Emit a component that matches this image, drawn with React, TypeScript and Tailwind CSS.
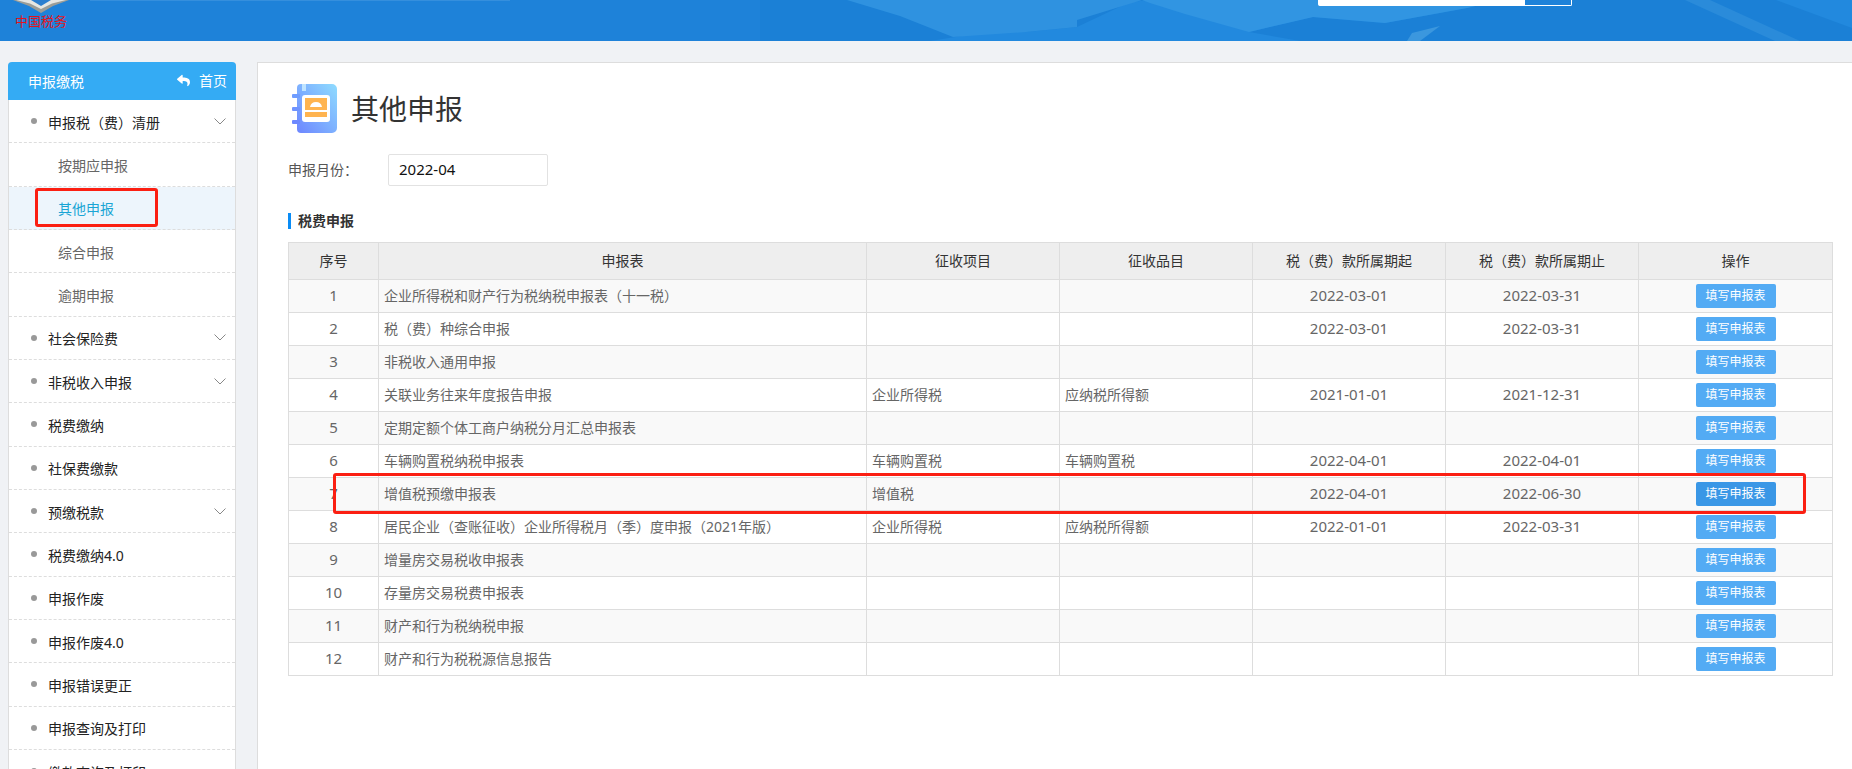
import { FaReply } from "react-icons/fa";

const menu = [
  { label: "申报税（费）清册", arrow: true },
  { label: "按期应申报", sub: true },
  { label: "其他申报", sub: true, active: true },
  { label: "综合申报", sub: true },
  { label: "逾期申报", sub: true },
  { label: "社会保险费", arrow: true },
  { label: "非税收入申报", arrow: true },
  { label: "税费缴纳" },
  { label: "社保费缴款" },
  { label: "预缴税款", arrow: true },
  { label: "税费缴纳4.0" },
  { label: "申报作废" },
  { label: "申报作废4.0" },
  { label: "申报错误更正" },
  { label: "申报查询及打印" },
  { label: "缴款查询及打印" },
];

const rows = [
  ["企业所得税和财产行为税纳税申报表（十一税）", "", "", "2022-03-01", "2022-03-31"],
  ["税（费）种综合申报", "", "", "2022-03-01", "2022-03-31"],
  ["非税收入通用申报", "", "", "", ""],
  ["关联业务往来年度报告申报", "企业所得税", "应纳税所得额", "2021-01-01", "2021-12-31"],
  ["定期定额个体工商户纳税分月汇总申报表", "", "", "", ""],
  ["车辆购置税纳税申报表", "车辆购置税", "车辆购置税", "2022-04-01", "2022-04-01"],
  ["增值税预缴申报表", "增值税", "", "2022-04-01", "2022-06-30"],
  ["居民企业（查账征收）企业所得税月（季）度申报（2021年版）", "企业所得税", "应纳税所得额", "2022-01-01", "2022-03-31"],
  ["增量房交易税收申报表", "", "", "", ""],
  ["存量房交易税费申报表", "", "", "", ""],
  ["财产和行为税纳税申报", "", "", "", ""],
  ["财产和行为税税源信息报告", "", "", "", ""],
];

const heads = ["序号", "申报表", "征收项目", "征收品目", "税（费）款所属期起", "税（费）款所属期止", "操作"];

function HeaderArt() {
  return (
    <svg className="absolute inset-0 w-full h-full" viewBox="0 0 1852 41" preserveAspectRatio="none">
      <polygon points="760,0 1852,0 1852,41 760,41" fill="#1b80d6" />
      <polygon points="930,41 1000,30 1026,32 1077,27 1130,2 1150,0 1500,0 1467,8 1385,23 1313,17 1249,32 1300,41" fill="#2289de" />
      <polygon points="847,0 1142,0 1077,20 1077,27 1026,32 953,37 900,16" fill="#2f92e0" />
      <polygon points="1142,0 1500,0 1467,8 1385,23 1313,17 1249,32 1185,14 1150,3" fill="#3195e2" />
      <polygon points="1685,0 1710,0 1800,41 1775,41" fill="#2a8bda" />
      <polygon points="1776,0 1852,0 1852,28" fill="#2289de" />
      <polygon points="1407,41 1412,33 1440,26 1420,41" fill="#3b97de" />
    </svg>
  );
}

function Logo() {
  return (
    <div className="relative flex flex-col items-center w-[52px] ml-[15px]">
      <svg width="56" height="13" viewBox="0 0 56 13" className="shrink-0">
        <path d="M0 0 H56 L40 6 L28 13 L16 6 Z" fill="#9a9d98" />
        <path d="M3 0 H53 L39 3.5 L28 9 L17 3.5 Z" fill="#e6e7e3" />
        <path d="M18 0 H38 L28 6 Z" fill="#2a7fd0" />
      </svg>
      <span className="text-[13px] leading-[16px] mt-[1px] text-[#e4141a] font-['Liberation_Serif','Noto_Sans_CJK_SC',serif] whitespace-nowrap">
        中国税务
      </span>
    </div>
  );
}

function NotebookIcon() {
  return (
    <svg width="45" height="49" viewBox="0 0 45 49" className="shrink-0 ml-[4px]">
      <defs>
        <linearGradient id="nb" x1="0" y1="1" x2="1" y2="0">
          <stop offset="0" stopColor="#6d86ff" />
          <stop offset="1" stopColor="#8fdcff" />
        </linearGradient>
      </defs>
      <path d="M5 4 a4 4 0 0 1 4-4 H40 a5 5 0 0 1 5 5 V44 a5 5 0 0 1-5 5 H9 a4 4 0 0 1-4-4 Z" fill="url(#nb)" />
      <rect x="0" y="10" width="8" height="4" rx="1" fill="#6f9dff" />
      <rect x="0" y="23" width="8" height="4" rx="1" fill="#6f93ff" />
      <rect x="0" y="36" width="8" height="4" rx="1" fill="#6d88ff" />
      <rect x="10" y="0" width="4" height="7" fill="#bfe4ff" />
      <rect x="10" y="11" width="28" height="27" rx="3" fill="#ffffff" />
      <rect x="13" y="14" width="22" height="12" fill="#ffb450" />
      <path d="M18 23 Q19 18 24 18 Q29 18 30 23 Z" fill="#ffffff" />
      <rect x="13" y="28" width="22" height="5" fill="#ffb450" />
    </svg>
  );
}

export default function App() {
  return (
    <div className="relative h-[769px] overflow-hidden flex flex-col bg-[#f0f2f5] font-['Noto_Sans','Noto_Sans_CJK_SC',sans-serif]">
      <header className="relative h-[41px] shrink-0 flex justify-between bg-[#1e82d9] overflow-hidden">
        <HeaderArt />
        <Logo />
        {/* title text cut off by the top edge, only its lower pixels show */}
        <div className="absolute left-[90px] top-0 w-[420px] h-[1px] bg-white/10" />
        <div className="relative flex w-[254px] h-[6px] mr-[280px] bg-white rounded-b-[2px] border-x border-b border-white">
          <div className="flex-1" />
          <div className="w-[46px] bg-[#1e82d9]" />
        </div>
      </header>

      <div className="flex flex-1 pt-[21px] pl-[8px] min-h-0">
        {/* Sidebar */}
        <aside className="w-[228px] shrink-0 bg-white border-x border-[#ddd] rounded-t-[4px]">
          <div className="h-[38px] -mx-px flex items-center justify-between pl-[20px] pr-[9px] bg-[#34abf4] rounded-t-[4px] text-white text-[14px]">
            <span className="pt-[1px]">申报缴税</span>
            <span className="flex items-center gap-[8px] -mt-[2px]">
              <FaReply className="w-[15px] h-[13px]" />
              首页
            </span>
          </div>
          {menu.map((m) => (
            <div
              key={m.label}
              className={
                "h-[43.33px] flex items-center border-b border-dashed border-[#ddd] text-[14px] " +
                (m.sub
                  ? "pl-[49px] " + (m.active ? "bg-[#edf5fc] text-[#1aa5d5]" : "text-[#666]")
                  : "pl-[22px] text-[#222]")
              }
            >
              {!m.sub && <span className="w-[6px] h-[6px] mr-[11px] rounded-full bg-[#999]" />}
              <span className="pt-[2px]">{m.label}</span>
              {m.arrow && (
                <svg width="12" height="7" viewBox="0 0 12 7" className="ml-auto mr-[9px]">
                  <polyline points="0.5,0.5 6,6 11.5,0.5" fill="none" stroke="#888" strokeWidth="1" />
                </svg>
              )}
            </div>
          ))}
        </aside>

        {/* Main panel */}
        <main className="flex-1 ml-[21px] pl-[30px] pt-[21px] bg-white border-l border-t border-[#ddd] text-[14px] text-[#666]">
          <div className="flex items-center h-[49px]">
            <NotebookIcon />
            <h1 className="ml-[14px] text-[28px] font-normal text-[#333] leading-none">其他申报</h1>
          </div>

          <div className="flex items-center mt-[21px]">
            <label className="w-[100px] pb-[2px] text-[#555]">申报月份：</label>
            <div className="w-[160px] h-[32px] flex items-center pl-[10px] pb-[2px] bg-white border border-[#e2e2e2] rounded-[2px] text-[15px] text-[#111]">
              2022-04
            </div>
          </div>

          <h2 className="mt-[27px] h-[16px] flex items-center pl-[7px] pb-[2px] border-l-[3px] border-[#0a8cf5] font-bold text-[#333]">
            税费申报
          </h2>

          <table className="mt-[13px] w-[1544px] table-fixed border-collapse">
            <colgroup>
              <col className="w-[90px]" />
              <col className="w-[488px]" />
              <col className="w-[193px]" />
              <col className="w-[193px]" />
              <col className="w-[193px]" />
              <col className="w-[193px]" />
              <col className="w-[194px]" />
            </colgroup>
            <thead>
              <tr className="h-[37px] bg-[#eee] text-[#333]">
                {heads.map((h) => (
                  <th key={h} className="border border-[#ddd] pb-[2px] font-normal">
                    {h}
                  </th>
                ))}
              </tr>
            </thead>
            <tbody>
              {rows.map((r, i) => (
                <tr key={r[0]} className={"h-[33px] " + (i % 2 === 0 ? "bg-[#f9f9f9]" : "bg-white")}>
                  <td className="border border-[#ddd] pb-[2px] text-center text-[15px]">{i + 1}</td>
                  <td className="border border-[#ddd] pl-[5px] pb-[2px] whitespace-nowrap">{r[0]}</td>
                  <td className="border border-[#ddd] pl-[5px] pb-[2px]">{r[1]}</td>
                  <td className="border border-[#ddd] pl-[5px] pb-[2px]">{r[2]}</td>
                  <td className="border border-[#ddd] pb-[2px] text-center text-[15px]">{r[3]}</td>
                  <td className="border border-[#ddd] pb-[2px] text-center text-[15px]">{r[4]}</td>
                  <td className="border border-[#ddd] text-center">
                    <button
                      className={
                        "inline-flex items-center justify-center align-middle w-[80px] h-[24px] rounded-[2px] text-[12px] text-white " +
                        (i === 6 ? "bg-[#3a97e6]" : "bg-[#53abf4]")
                      }
                    >
                      填写申报表
                    </button>
                  </td>
                </tr>
              ))}
            </tbody>
          </table>
        </main>
      </div>

      {/* red annotation boxes */}
      <div className="absolute left-[35px] top-[188px] w-[123px] h-[39px] border-[3px] border-[#fb1f12] rounded-[3px]" />
      <div className="absolute left-[333px] top-[473px] w-[1473px] h-[41px] border-[3px] border-[#fb1f12] rounded-[3px]" />
    </div>
  );
}
